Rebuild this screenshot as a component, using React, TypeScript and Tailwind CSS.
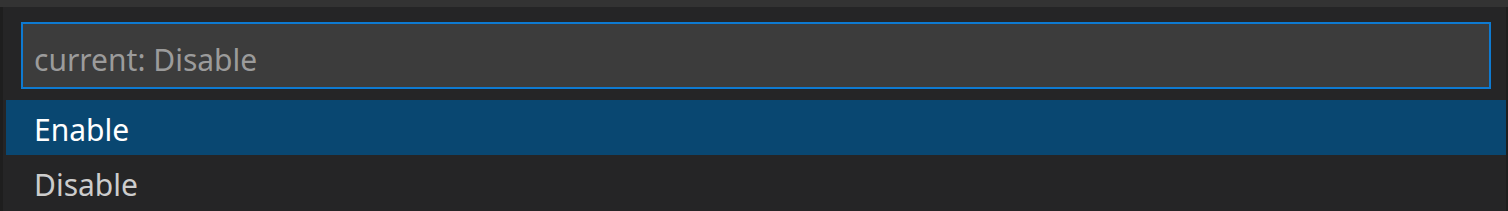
import React from 'react';

const options = [
  { label: 'Enable', selected: true },
  { label: 'Disable', selected: false },
];

const App: React.FC = () => {
  return (
    <div className="w-[1508px] h-[211px] flex flex-col bg-[#252526] overflow-hidden" style={{ fontFamily: '"Noto Sans", "Open Sans", sans-serif' }}>
      <div className="h-[7px] bg-[#333333]" />
      <div className="flex flex-1">
        <div className="w-[3px] bg-[#1e1e1e]" />
        <div className="flex-1 flex flex-col pl-[3px] pt-[15px]">
          {/* Input */}
          <div className="mx-[15px] h-[67px] border-2 border-[#0e7ad1] bg-[#3c3c3c] flex items-center px-[11px] pt-[8px]">
            <span className="text-[30px] text-[#9b9b9b] leading-none">current: Disable</span>
          </div>

          {/* Options */}
          <div className="mt-[11px] flex flex-col">
            {options.map((o) => (
              <div
                key={o.label}
                className={
                  o.selected
                    ? 'h-[55px] flex items-center pl-[28px] pt-[4px] bg-[#094771] text-white text-[30px]'
                    : 'h-[55px] flex items-center pl-[28px] pt-[4px] text-[#cccccc] text-[30px]'
                }
              >
                {o.label}
              </div>
            ))}
          </div>
        </div>
        <div className="w-[2px] bg-[#1e1e1e]" />
      </div>
    </div>
  );
};

export default App;
